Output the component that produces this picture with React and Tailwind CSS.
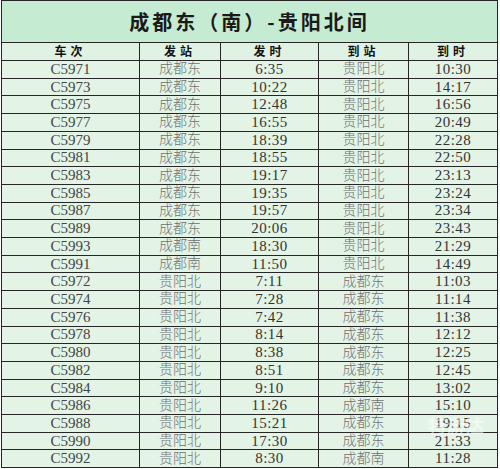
import React from "react";

const rows = [
	["C5971", "成都东", "6:35", "贵阳北", "10:30"],
	["C5973", "成都东", "10:22", "贵阳北", "14:17"],
	["C5975", "成都东", "12:48", "贵阳北", "16:56"],
	["C5977", "成都东", "16:55", "贵阳北", "20:49"],
	["C5979", "成都东", "18:39", "贵阳北", "22:28"],
	["C5981", "成都东", "18:55", "贵阳北", "22:50"],
	["C5983", "成都东", "19:17", "贵阳北", "23:13"],
	["C5985", "成都东", "19:35", "贵阳北", "23:24"],
	["C5987", "成都东", "19:57", "贵阳北", "23:34"],
	["C5989", "成都东", "20:06", "贵阳北", "23:43"],
	["C5993", "成都南", "18:30", "贵阳北", "21:29"],
	["C5991", "成都南", "11:50", "贵阳北", "14:49"],
	["C5972", "贵阳北", "7:11", "成都东", "11:03"],
	["C5974", "贵阳北", "7:28", "成都东", "11:14"],
	["C5976", "贵阳北", "7:42", "成都东", "11:38"],
	["C5978", "贵阳北", "8:14", "成都东", "12:12"],
	["C5980", "贵阳北", "8:38", "成都东", "12:25"],
	["C5982", "贵阳北", "8:51", "成都东", "12:45"],
	["C5984", "贵阳北", "9:10", "成都东", "13:02"],
	["C5986", "贵阳北", "11:26", "成都南", "15:10"],
	["C5988", "贵阳北", "15:21", "成都东", "19:15"],
	["C5990", "贵阳北", "17:30", "成都东", "21:33"],
	["C5992", "贵阳北", "8:30", "成都南", "11:28"],
];

const latin = "font-['Liberation_Serif','Noto_Sans_CJK_SC',serif] text-[15px] leading-none";
const cjk = "font-['Liberation_Serif','Noto_Sans_CJK_SC',serif] text-[14px] leading-none font-light";

function App() {
	return (
		<div className="relative w-[500px] h-[469px] bg-white overflow-hidden">
			<div className="ml-[1px] w-[497px] h-[468px] border border-[#262626] flex flex-col bg-[#e3f4e7]">
				<div className="h-[42px] shrink-0 border-b border-[#262626] bg-[#c5ecd2] flex items-center justify-center">
					<h1 className="font-['Noto_Sans_CJK_SC',sans-serif] font-bold text-[20px] tracking-[3px] text-[#1a1a1a] leading-none">
						成都东（南）-贵阳北间
					</h1>
				</div>
				<div className="h-[18px] shrink-0 border-b border-[#262626] bg-[#e0f2e4] flex font-['Liberation_Serif','Noto_Sans_CJK_SC',serif] font-bold text-[12px] tracking-[4px] text-[#111] leading-none">
					<div className="w-[138px] border-r border-[#262626] flex items-center justify-center">车次</div>
					<div className="w-[81px] border-r border-[#262626] flex items-center justify-center">发站</div>
					<div className="w-[98px] border-r border-[#262626] flex items-center justify-center">发时</div>
					<div className="w-[90px] border-r border-[#262626] flex items-center justify-center">到站</div>
					<div className="flex-1 flex items-center justify-center">到时</div>
				</div>
				{rows.map((r, i) => (
					<div key={r[0]} className={"flex-1 flex " + (i < rows.length - 1 ? "border-b border-[#262626]" : "")}>
						<div className={"w-[138px] border-r border-[#262626] flex items-center justify-center text-[#444] " + latin}>{r[0]}</div>
						<div className={"w-[81px] border-r border-[#262626] flex items-center justify-center text-[#707070] " + cjk}>{r[1]}</div>
						<div className={"w-[98px] border-r border-[#262626] flex items-center justify-center text-[#333] tracking-[0.5px] " + latin}>{r[2]}</div>
						<div className={"w-[90px] border-r border-[#262626] flex items-center justify-center text-[#707070] " + cjk}>{r[3]}</div>
						<div className={"flex-1 flex items-center justify-center text-[#333] tracking-[0.5px] " + latin}>{r[4]}</div>
					</div>
				))}
			</div>
			<div className="absolute left-[428px] top-[418px] font-['Liberation_Sans','Noto_Sans_CJK_SC',sans-serif] font-bold text-[18px] tracking-[1px] text-white/50 leading-none">
				特游达
			</div>
		</div>
	);
}

export default App;
